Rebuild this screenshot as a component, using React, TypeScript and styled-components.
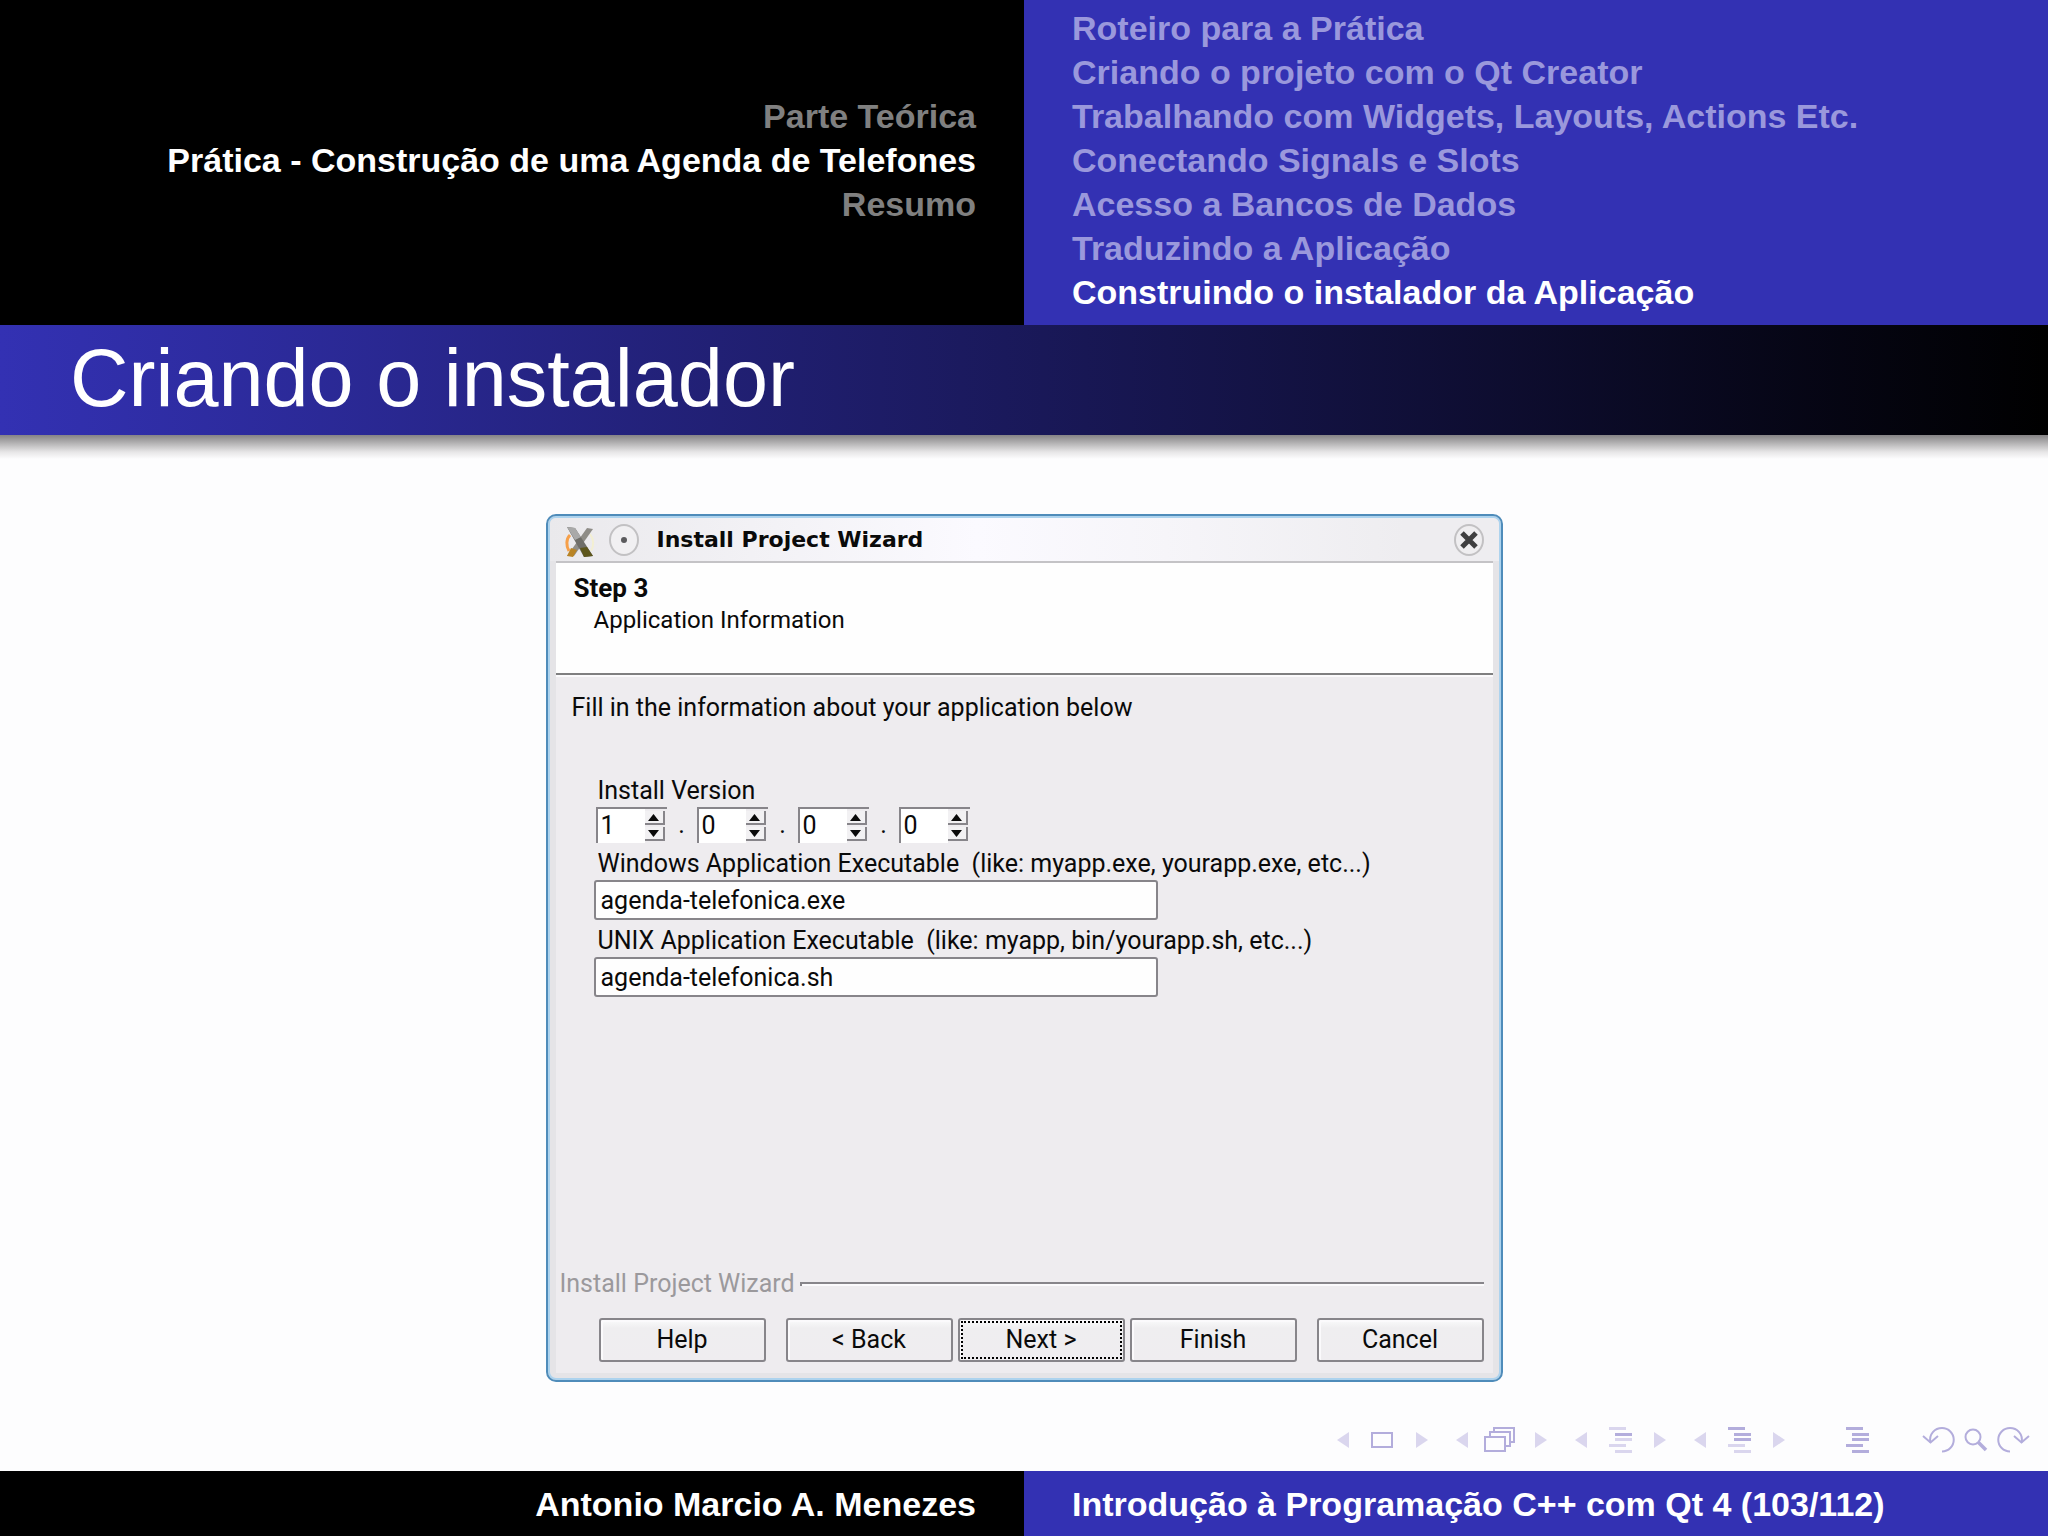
import React, { useState } from "react";
import styled, { createGlobalStyle, css } from "styled-components";

const BLUE = "#3331b3";
const DIALOG_BG = "#eeecef";
const EDGE = "#87858a";

const GlobalStyle = createGlobalStyle`
  *, *::before, *::after { box-sizing: border-box; }
  body { margin: 0; background: #fdfdfe; }
`;

const Slide = styled.div`
  display: flex;
  flex-direction: column;
  min-height: 100vh;
  font-family: "Liberation Sans", Arial, sans-serif;
`;

/* ---------- Slide header ---------- */

const SplitBar = styled.div`
  display: grid;
  grid-template-columns: 1fr 1fr;
  font-size: 34px;
  font-weight: 700;
  line-height: 44px;
  color: #fff;
`;

const Half = styled.nav<{ $side: "left" | "right" }>`
  display: flex;
  flex-direction: column;
  justify-content: center;
  padding: 6px 48px 11px;
  ${(p) =>
    p.$side === "left"
      ? css`
          background: #000;
          align-items: flex-end;
        `
      : css`
          background: ${BLUE};
          align-items: flex-start;
        `}
`;

const SectionLink = styled.a<{ $tone: string }>`
  color: ${(p) => p.$tone};
  text-decoration: none;
  white-space: nowrap;
`;

const TitleBar = styled.header`
  height: 110px;
  padding: 0 70px 4px;
  display: flex;
  align-items: center;
  background: linear-gradient(to right, ${BLUE}, #000);
`;

const SlideTitle = styled.h1`
  margin: 0;
  font-size: 81px;
  font-weight: 400;
  line-height: 104px;
  color: #fff;
`;

const TitleShadow = styled.div`
  height: 24px;
  background: linear-gradient(to bottom, #858385, #b5b4b5 35%, #e6e5e6 70%, #fdfdfe);
`;

/* ---------- Slide body ---------- */

const Stage = styled.main`
  flex: 1;
  display: flex;
  flex-direction: column;
  align-items: center;
  padding-top: 55px;
`;

const Dialog = styled.section`
  width: 957px;
  max-width: 100%;
  height: 868px;
  display: flex;
  flex-direction: column;
  padding: 2px 8px 7px;
  border: 2px solid #4f8cba;
  border-radius: 10px;
  background: #e5e4e7;
  box-shadow: inset 0 0 0 2px #add3ee;
  font-family: Roboto, "Liberation Sans", sans-serif;
  font-size: 25px;
  line-height: 28px;
  color: #0a0a0a;
`;

const Caption = styled.div`
  height: 43px;
  margin: 0 -6px;
  padding: 0 15px;
  display: flex;
  align-items: center;
  background: linear-gradient(to right, #eae9ec, #fbfaff 45%, #f6f5f9 65%, #eeedf0 90%);
  border-radius: 6px 6px 0 0;
`;

const CaptionText = styled.h2`
  flex: 1;
  margin: 0 0 0 18px;
  font-family: "DejaVu Sans", sans-serif;
  font-size: 22px;
  font-weight: 700;
  line-height: 28px;
`;

const RoundButton = styled.button`
  width: 30px;
  height: 32px;
  padding: 0;
  border: 0;
  background: none;
  display: block;
`;

const AppMark = styled.svg`
  width: 30px;
  height: 32px;
  margin-right: 14px;
  margin-top: 4px;
`;

const StepBanner = styled.div`
  height: 114px;
  padding: 9px 18px;
  background: #fefefe;
  border-top: 2px solid #c4c3c6;
  border-bottom: 2px solid #7f7f80;
`;

const StepTitle = styled.h3`
  margin: 0;
  font-size: 26px;
  font-weight: 700;
  line-height: 32px;
`;

const StepText = styled.p`
  margin: 0;
  padding-left: 20px;
  font-size: 24px;
  line-height: 32px;
`;

const Panel = styled.div`
  flex: 1;
  display: flex;
  flex-direction: column;
  background: ${DIALOG_BG};
  border-top: 2px solid #fbfafc;
`;

const Intro = styled.p`
  margin: 0;
  padding: 17px 16px 53px;
`;

const Form = styled.form`
  flex: 1;
  padding: 0 38px;
`;

const FieldLabel = styled.label`
  display: block;
  padding: 5px 4px 0;
  line-height: 32px;
  white-space: pre;
`;

const Versions = styled.fieldset`
  margin: 0;
  padding: 0 2px;
  border: 0;
  display: flex;
`;

const VersionLegend = styled.legend`
  padding: 0 2px;
  line-height: 32px;
`;

const Dot = styled.span`
  width: 30px;
  line-height: 36px;
  text-align: center;
`;

const Spinner = styled.span`
  width: 71px;
  height: 36px;
  display: flex;
  justify-content: space-between;
  border-top: 2px solid ${EDGE};
  border-left: 2px solid ${EDGE};
  background: #fff;
`;

const SpinnerInput = styled.input`
  width: 44px;
  padding: 0 0 0 3px;
  border: 0;
  outline: 0;
  background: none;
  font: inherit;
  color: inherit;
`;

const Steppers = styled.span`
  display: flex;
  flex-direction: column;
  gap: 2px;
  padding: 2px 2px 2px 0;
  background: ${DIALOG_BG};
`;

const Stepper = styled.button`
  flex: 1;
  width: 20px;
  padding: 0;
  border: solid ${EDGE};
  border-width: 0 2px 2px 0;
  background: #f2f1f3;
  display: flex;
  align-items: center;
  justify-content: center;
`;

const TextInput = styled.input`
  display: block;
  width: 564px;
  max-width: 100%;
  height: 40px;
  padding: 0 5px;
  border: 2px solid ${EDGE};
  border-radius: 3px;
  background: #fefefe;
  font: inherit;
  color: inherit;
`;

const GroupRule = styled.div`
  display: flex;
  align-items: center;
  gap: 5px;
  padding: 0 9px 0 4px;
  color: #9b999c;

  &::after {
    content: "";
    flex: 1;
    height: 4px;
    border-top: 2px solid ${EDGE};
    border-left: 2px solid ${EDGE};
    background: #fbfafc;
  }
`;

const Actions = styled.div`
  display: flex;
  justify-content: flex-end;
  gap: 5px;
  padding: 20px 9px 11px;
`;

const ActionButton = styled.button<{ $apart?: "left" | "right"; $focus?: boolean }>`
  width: 167px;
  height: 44px;
  padding: 0;
  border: 2px solid ${EDGE};
  border-radius: 3px;
  background: linear-gradient(to bottom, #fafafb, #efeef0 20%, #efedf0);
  box-shadow: inset 2px 2px 0 #fbfafc;
  font: inherit;
  color: inherit;
  ${(p) => p.$apart === "right" && "margin-right: 15px;"}
  ${(p) => p.$apart === "left" && "margin-left: 15px;"}
  ${(p) => p.$focus && "outline: 2px dotted #000; outline-offset: -5px;"}
`;

/* ---------- Beamer navigation symbols ---------- */

const NavSymbols = styled.nav`
  display: flex;
  justify-content: flex-end;
  align-items: center;
  height: 32px;
  margin: 0 18px 15px;
  gap: 28px;
`;

const NavGroup = styled.div<{ $gap: number; $before?: number }>`
  display: flex;
  align-items: center;
  gap: ${(p) => p.$gap}px;
  margin-left: ${(p) => p.$before ?? 0}px;
`;

const NavButton = styled.button`
  padding: 0;
  border: 0;
  background: none;
  display: block;

  svg {
    display: block;
  }
`;

/* ---------- Slide footer ---------- */

const FooterHalf = styled.div<{ $side: "left" | "right" }>`
  height: 65px;
  padding: 11px 48px 10px;
  white-space: nowrap;
  text-align: ${(p) => (p.$side === "left" ? "right" : "left")};
  background: ${(p) => (p.$side === "left" ? "#000" : BLUE)};
`;

const PALE = "#dad6ee";
const STRONG = "#b3addc";

const Triangle = ({ dir, label }: { dir: "left" | "right"; label: string }) => (
  <NavButton aria-label={label}>
    <svg width="12" height="16" viewBox="0 0 12 16">
      <path d={dir === "left" ? "M12 0V16L0 8Z" : "M0 0V16L12 8Z"} fill={PALE} />
    </svg>
  </NavButton>
);

const FrameIcon = () => (
  <svg width="23" height="26" viewBox="0 0 23 26">
    <rect x="1" y="6" width="20" height="14" fill="none" stroke={STRONG} strokeWidth="2" />
  </svg>
);

const FramesIcon = () => (
  <svg width="35" height="26" viewBox="0 0 35 26">
    <g fill="#fdfdfe" stroke={STRONG} strokeWidth="2">
      <rect x="10" y="1" width="20" height="14" />
      <rect x="6" y="5" width="20" height="14" />
      <rect x="1" y="10" width="20" height="14" />
    </g>
  </svg>
);

const LinesIcon = ({ strong }: { strong: number[] }) => (
  <svg width="23" height="26" viewBox="0 0 23 26">
    {[0, 6, 6, 0, 6].map((x, i) => (
      <rect
        key={i}
        x={x}
        y={[0, 6, 11, 17, 23][i]}
        width="17"
        height="3"
        fill={strong.includes(i) ? STRONG : PALE}
      />
    ))}
  </svg>
);

const TurnIcon = ({ forward }: { forward?: boolean }) => (
  <svg width="33" height="28" viewBox="0 0 33 28">
    <g
      fill="none"
      stroke={STRONG}
      strokeWidth="2"
      transform={forward ? "translate(33 0) scale(-1 1)" : undefined}
    >
      <path d="M8.500 16.500C6.500 8 13 2 20 2a11.500 11.500 0 0 1 0 23.500" />
      <path d="M1 10L8.500 16.500L16 10" />
    </g>
  </svg>
);

const SearchIcon = () => (
  <svg width="24" height="26" viewBox="0 0 24 26">
    <circle cx="9" cy="10" r="7.500" fill="none" stroke={STRONG} strokeWidth="2" />
    <path d="M14 15L22 23" stroke={STRONG} strokeWidth="3.500" />
  </svg>
);

/* ---------- Data ---------- */

const leftSections = [
  { text: "Parte Teórica", on: false },
  { text: "Prática - Construção de uma Agenda de Telefones", on: true },
  { text: "Resumo", on: false },
];

const rightSections = [
  { text: "Roteiro para a Prática", on: false },
  { text: "Criando o projeto com o Qt Creator", on: false },
  { text: "Trabalhando com Widgets, Layouts, Actions Etc.", on: false },
  { text: "Conectando Signals e Slots", on: false },
  { text: "Acesso a Bancos de Dados", on: false },
  { text: "Traduzindo a Aplicação", on: false },
  { text: "Construindo o instalador da Aplicação", on: true },
];

const VersionPart = ({ value, label }: { value: number; label: string }) => {
  const [current, setCurrent] = useState(value);
  return (
    <Spinner>
      <SpinnerInput
        aria-label={label}
        value={current}
        onChange={(e) => setCurrent(Number(e.target.value) || 0)}
      />
      <Steppers>
        <Stepper type="button" aria-label="Increase" onClick={() => setCurrent(current + 1)}>
          <svg width="11" height="7" viewBox="0 0 11 7">
            <path d="M5.500 0L11 7H0Z" fill="#0a0a0a" />
          </svg>
        </Stepper>
        <Stepper
          type="button"
          aria-label="Decrease"
          onClick={() => setCurrent(Math.max(0, current - 1))}
        >
          <svg width="11" height="7" viewBox="0 0 11 7">
            <path d="M0 0H11L5.500 7Z" fill="#0a0a0a" />
          </svg>
        </Stepper>
      </Steppers>
    </Spinner>
  );
};

const WizardDialog = () => (
  <Dialog aria-label="Install Project Wizard">
    <Caption>
      <AppMark viewBox="0 0 30 32" aria-hidden="true">
        <path d="M5 9C1 13 1 20 4 25" fill="none" stroke="#f6a04a" strokeWidth="3" />
        <path d="M25 8C29 13 29 20 26 25" fill="none" stroke="#f3efd2" strokeWidth="2" />
        <path d="M22 2L28 3L9 30L2 30Z" fill="#8f8d88" />
        <path d="M6 22L12 24L8 31L2 30Z" fill="#b98425" />
        <path d="M2 1L10 2L28 30L19 31Z" fill="#6f6e69" />
        <path d="M2 1L10 2L16 11L10 14Z" fill="#a9a9a9" />
        <path d="M15 22L22 21L28 30L19 31Z" fill="#5d561c" />
      </AppMark>
      <RoundButton aria-label="Window menu">
        <svg width="30" height="32" viewBox="0 0 30 32">
          <ellipse cx="15" cy="16" rx="14" ry="15" fill="#f1f0f2" stroke="#c2c1c3" strokeWidth="2" />
          <circle cx="15" cy="16" r="3" fill="#5b5b5d" />
        </svg>
      </RoundButton>
      <CaptionText>Install Project Wizard</CaptionText>
      <RoundButton aria-label="Close">
        <svg width="30" height="32" viewBox="0 0 30 32">
          <ellipse cx="15" cy="16" rx="14" ry="15" fill="#efeef0" stroke="#c2c1c3" strokeWidth="2" />
          <path d="M8 9L22 23M22 9L8 23" stroke="#3f3f40" strokeWidth="5" />
        </svg>
      </RoundButton>
    </Caption>
    <StepBanner>
      <StepTitle>Step 3</StepTitle>
      <StepText>Application Information</StepText>
    </StepBanner>
    <Panel>
      <Intro>Fill in the information about your application below</Intro>
      <Form>
        <Versions>
          <VersionLegend>Install Version</VersionLegend>
          <VersionPart value={1} label="Major" />
          <Dot>.</Dot>
          <VersionPart value={0} label="Minor" />
          <Dot>.</Dot>
          <VersionPart value={0} label="Patch" />
          <Dot>.</Dot>
          <VersionPart value={0} label="Build" />
        </Versions>
        <FieldLabel htmlFor="win">
          {"Windows Application Executable  (like: myapp.exe, yourapp.exe, etc...)"}
        </FieldLabel>
        <TextInput id="win" defaultValue="agenda-telefonica.exe" />
        <FieldLabel htmlFor="unix">
          {"UNIX Application Executable  (like: myapp, bin/yourapp.sh, etc...)"}
        </FieldLabel>
        <TextInput id="unix" defaultValue="agenda-telefonica.sh" />
      </Form>
      <GroupRule>Install Project Wizard</GroupRule>
      <Actions>
        <ActionButton $apart="right">Help</ActionButton>
        <ActionButton>&lt; Back</ActionButton>
        <ActionButton $focus>Next &gt;</ActionButton>
        <ActionButton>Finish</ActionButton>
        <ActionButton $apart="left">Cancel</ActionButton>
      </Actions>
    </Panel>
  </Dialog>
);

const App = () => (
  <Slide>
    <GlobalStyle />
    <SplitBar>
      <Half $side="left">
        {leftSections.map((s) => (
          <SectionLink key={s.text} href="#" $tone={s.on ? "#fff" : "#808080"}>
            {s.text}
          </SectionLink>
        ))}
      </Half>
      <Half $side="right">
        {rightSections.map((s) => (
          <SectionLink key={s.text} href="#" $tone={s.on ? "#fff" : "#9a98dc"}>
            {s.text}
          </SectionLink>
        ))}
      </Half>
    </SplitBar>
    <TitleBar>
      <SlideTitle>Criando o instalador</SlideTitle>
    </TitleBar>
    <TitleShadow />
    <Stage>
      <WizardDialog />
    </Stage>
    <NavSymbols aria-label="Slide navigation">
      <NavGroup $gap={22}>
        <Triangle dir="left" label="Previous slide" />
        <NavButton aria-label="Slide"><FrameIcon /></NavButton>
        <Triangle dir="right" label="Next slide" />
      </NavGroup>
      <NavGroup $gap={16}>
        <Triangle dir="left" label="Previous frame" />
        <NavButton aria-label="Frame"><FramesIcon /></NavButton>
        <Triangle dir="right" label="Next frame" />
      </NavGroup>
      <NavGroup $gap={22}>
        <Triangle dir="left" label="Previous subsection" />
        <NavButton aria-label="Subsection"><LinesIcon strong={[1]} /></NavButton>
        <Triangle dir="right" label="Next subsection" />
      </NavGroup>
      <NavGroup $gap={22}>
        <Triangle dir="left" label="Previous section" />
        <NavButton aria-label="Section"><LinesIcon strong={[0, 1, 2]} /></NavButton>
        <Triangle dir="right" label="Next section" />
      </NavGroup>
      <NavGroup $gap={0} $before={33}>
        <NavButton aria-label="Presentation"><LinesIcon strong={[0, 1, 2, 3, 4]} /></NavButton>
      </NavGroup>
      <NavGroup $gap={9} $before={25}>
        <NavButton aria-label="Back"><TurnIcon /></NavButton>
        <NavButton aria-label="Search"><SearchIcon /></NavButton>
        <NavButton aria-label="Forward"><TurnIcon forward /></NavButton>
      </NavGroup>
    </NavSymbols>
    <SplitBar as="footer">
      <FooterHalf $side="left">Antonio Marcio A. Menezes</FooterHalf>
      <FooterHalf $side="right">Introdução à Programação C++ com Qt 4 (103/112)</FooterHalf>
    </SplitBar>
  </Slide>
);

export default App;
